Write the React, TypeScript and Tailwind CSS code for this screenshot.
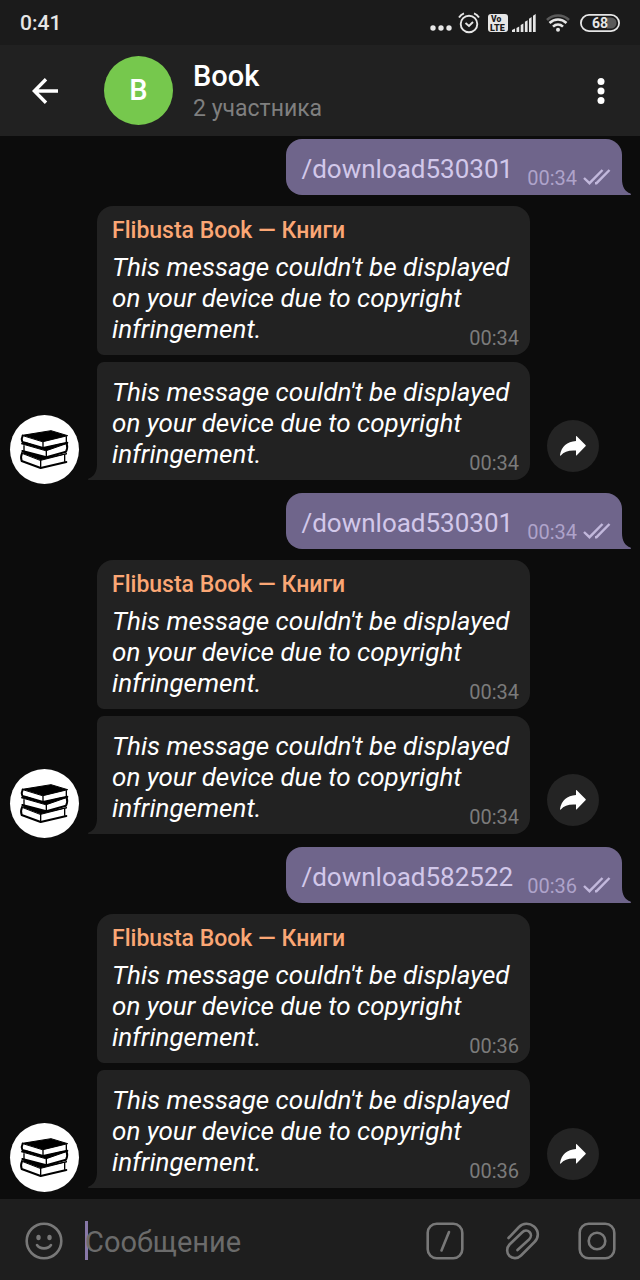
import { useState } from 'react';

type Exchange = {
  command: string;
  time: string;
};

const AUTHOR = 'Flibusta Book — Книги';
const NOTICE = "This message couldn't be displayed on your device due to copyright infringement.";

const exchanges: Exchange[] = [
  { command: '/download530301', time: '00:34' },
  { command: '/download530301', time: '00:34' },
  { command: '/download582522', time: '00:36' },
];

function StatusBar() {
  return (
    <div className="flex h-[45px] items-center justify-between bg-[#1b1b1b] px-5 text-[#e6e6e6]">
      <span className="text-[21px] leading-6 font-medium">0:41</span>
      <div className="flex items-center">
        <svg className="mt-[11px] mr-[6px] h-[6px] w-[22px]" viewBox="0 0 22 6" fill="currentColor">
          <circle cx="3" cy="3" r="2.7" />
          <circle cx="11" cy="3" r="2.7" />
          <circle cx="19" cy="3" r="2.7" />
        </svg>
        {/* Alarm */}
        <svg className="mr-2 h-[22px] w-[22px]" viewBox="0 0 22 22" fill="none" stroke="currentColor" strokeWidth="1.9">
          <circle cx="11" cy="12" r="8.3" />
          <path d="M7.5 11 L11 14 L15 10" />
          <path d="M1 5.5 C2.3 3.3 3.8 2 6 1.3 M16 1.3 C18.2 2 19.7 3.3 21 5.5" />
        </svg>
        {/* VoLTE */}
        <svg className="mr-1 h-[18px] w-5" viewBox="0 0 20 18">
          <rect width="20" height="18" rx="3" fill="#e6e6e6" />
          <text x="3" y="8" fontSize="8.5" fontWeight="900" fill="#1b1b1b">Vo</text>
          <text x="2" y="16.5" fontSize="9" fontWeight="900" fill="#1b1b1b">LTE</text>
        </svg>
        {/* Signal */}
        <svg className="mr-[10px] h-[18px] w-6" viewBox="0 0 24 18" fill="currentColor">
          <path d="M0 18 V16 L3 14.5 V18 Z M4.5 18 V14 L7.2 12.5 V18 Z M8.7 18 V11 L11.4 9.5 V18 Z M12.9 18 V7.8 L15.6 6.2 V18 Z M17 18 V4.7 L19.6 3 V18 Z M21 18 V1.8 L23.7 0 V18 Z" />
        </svg>
        {/* Wi-Fi */}
        <svg className="mr-[10px] h-[18px] w-6" viewBox="0 0 24 18" fill="none" strokeWidth="2.6">
          <path d="M1 6 C7 0 17 0 23 6" stroke="#5a5a5a" />
          <path d="M3.5 9 C8.5 4.3 15.5 4.3 20.5 9 M7 12.6 C10 9.8 14 9.8 17 12.6" stroke="currentColor" />
          <circle cx="12" cy="15.8" r="2" fill="currentColor" />
        </svg>
        {/* Battery */}
        <svg className="h-[18px] w-10" viewBox="0 0 40 18">
          <path d="M27 3.5 H31 A5.5 5.5 0 0 1 31 14.5 H27 Z" fill="#5a5a5a" />
          <rect x="0.9" y="0.9" width="38.2" height="16.2" rx="8.1" fill="none" stroke="#e6e6e6" strokeWidth="1.8" />
          <text x="20" y="14" fontSize="14" fontWeight="700" textAnchor="middle" fill="#e6e6e6">68</text>
        </svg>
      </div>
    </div>
  );
}

function ChatHeader() {
  return (
    <header className="flex h-[91px] items-center bg-[#212121] pl-8 pr-[31px]">
      <button aria-label="Назад" className="text-white">
        <svg className="h-[26px] w-[26px]" viewBox="0 0 26 26" fill="none" stroke="currentColor" strokeWidth="3.4">
          <path d="M26 13 H2.5 M14 1.3 L2.4 13 L14 24.7" />
        </svg>
      </button>
      <div className="ml-[46px] flex size-[69px] items-center justify-center rounded-full bg-[#76c84d] text-[29px] font-medium text-white">
        B
      </div>
      <div className="ml-5 flex-1 pt-1">
        <h1 className="text-[29px] leading-8 font-medium text-white">Book</h1>
        <p className="text-[23px] leading-[34px] text-[#7f7f7f]">2 участника</p>
      </div>
      <button aria-label="Меню" className="px-1 text-white">
        <svg className="h-[26px] w-2" viewBox="0 0 8 26" fill="currentColor">
          <circle cx="4" cy="3.6" r="3.5" />
          <circle cx="4" cy="13" r="3.5" />
          <circle cx="4" cy="22.4" r="3.5" />
        </svg>
      </button>
    </header>
  );
}

function OutgoingMessage({ command, time }: Exchange) {
  return (
    <div className="relative mr-[18px] flex h-14 items-center self-end rounded-[16px] rounded-br-none bg-[#6f658b] pr-[11px] pl-[15px]">
      <a href="#" className="mt-1 text-[26px] leading-[31px] text-[#d2c8ea]">{command}</a>
      <span className="mt-[22px] ml-[14px] text-[20px] leading-6 text-[#aea3ca]">{time}</span>
      <svg className="mt-5 ml-[6px] h-4 w-7" viewBox="0 0 28 16" fill="none" stroke="#c2b8dc" strokeWidth="2.4">
        <path d="M1 9 L6.5 14.2 L19.5 1 M12 14.2 L13.5 14.2 L26.5 1" />
      </svg>
      <svg className="absolute bottom-0 left-full h-4 w-[9px]" viewBox="0 0 9 16" fill="#6f658b">
        <path d="M0 0 C0 8 3 12.500 8.500 14.500 Q9.500 16 8 16 H0 Z" />
      </svg>
    </div>
  );
}

function IncomingMessage({ author, time }: { author?: string; time: string }) {
  return (
    <div
      className={
        author
          ? 'rounded-[16px] rounded-bl-[7px] bg-[#222222] px-[15px] pt-[11px] pb-[10px]'
          : 'relative mt-[7px] rounded-[16px] rounded-tl-[7px] rounded-bl-none bg-[#222222] px-[15px] pt-[15px] pb-[10px]'
      }
    >
      {author && <p className="mb-[7px] text-[23px] leading-7 font-medium text-[#fba775]">{author}</p>}
      <p className="text-[26px] leading-[31px] text-white italic">
        {NOTICE}
        {/* floats onto the last line */}
        <span className="float-right mt-3 -mr-1 text-[20px] leading-6 text-[#7b7b7b] not-italic">{time}</span>
      </p>
      {!author && (
        <svg className="absolute right-full bottom-0 h-4 w-[9px]" viewBox="0 0 9 16" fill="#222222">
          <path d="M9 0 C9 8 6 12.500 0.500 14.500 Q-0.500 16 1 16 H9 Z" />
        </svg>
      )}
    </div>
  );
}

function BooksAvatar() {
  return (
    <div className="-mb-1 size-[69px] shrink-0 rounded-full bg-white">
      <svg className="size-full" viewBox="15 15 207 207" fill="none" stroke="#000" strokeLinejoin="round" strokeLinecap="round">
        {/* bottom book */}
        <path d="M50 129 L66 127 L122 142 L150 138 L186 131 L107 151 Z" fill="#000" strokeWidth="3" />
        <path d="M51 130 Q46 140 50 153 L107 174 L184 156" strokeWidth="6" />
        <path d="M107 151 V172 M179 134 V154" strokeWidth="4" />
        {/* middle book */}
        <path d="M50 101 L66 99 L114 115 L170 101 L187 100 L124 122 Z" fill="#000" strokeWidth="3" />
        <path d="M57 107 V123 M124 122 V140" strokeWidth="4" />
        <path d="M52 123 L124 142 L183 125 Q189 114 185 101" strokeWidth="6" />
        {/* top book */}
        <path d="M52 76 L138 62 L188 77 L114 95 Z" fill="#000" strokeWidth="3" />
        <path d="M53 77 Q48 86 52 96 L114 114 L187 98" strokeWidth="6" />
        <path d="M114 95 V113 M184 80 V97" strokeWidth="4" />
      </svg>
    </div>
  );
}

function ReplyGroup({ time }: { time: string }) {
  return (
    <div className="mt-[11px] flex items-end pl-[10px]">
      <BooksAvatar />
      <div className="ml-[18px] w-[433px]">
        <IncomingMessage author={AUTHOR} time={time} />
        <IncomingMessage time={time} />
      </div>
      <button aria-label="Переслать" className="mb-2 ml-[17px] flex size-[52px] items-center justify-center rounded-full bg-[#242424] text-white">
        <svg className="h-5 w-[26px]" viewBox="0 0 26 20" fill="currentColor">
          <path d="M16 0.500 Q16 -0.500 17 0.400 L25.500 9 Q26 9.700 25.500 10.300 L17 19 Q16 20 16 19 V14.500 C9 14 4 15.500 0.800 19.500 Q0 20 0 19 C1.500 10.500 7 5.500 16 5 Z" />
        </svg>
      </button>
    </div>
  );
}

function Composer() {
  const [text, setText] = useState('');

  return (
    <footer className="flex h-[81px] items-center bg-[#1e1e1e] pt-[2px] pr-6 pl-[25px] text-[#787878]">
      <button aria-label="Эмодзи">
        <svg className="size-[38px]" viewBox="0 0 38 38" fill="none" stroke="currentColor" strokeWidth="2.600">
          <circle cx="19" cy="19" r="17.300" />
          <path d="M12 23 C15 27.500 23 27.500 26 23" strokeLinecap="round" />
          <ellipse cx="13.500" cy="15.500" rx="2.200" ry="2.800" fill="currentColor" stroke="none" />
          <ellipse cx="24.500" cy="15.500" rx="2.200" ry="2.800" fill="currentColor" stroke="none" />
        </svg>
      </button>
      {/* Caret */}
      <span className="ml-[22px] h-[39px] w-[3px] bg-[#8878a8]" />
      <input
        type="text"
        aria-label="Сообщение"
        placeholder="Сообщение"
        value={text}
        onChange={(e) => setText(e.target.value)}
        className="-ml-[3px] h-11 min-w-0 flex-1 bg-transparent pt-[3px] text-[29px] text-white outline-none placeholder:text-[#6b6b6b]"
      />
      <div className="flex items-center gap-[38px]">
        <button aria-label="Команды">
          <svg className="size-[38px]" viewBox="0 0 38 38" fill="none" stroke="currentColor" strokeWidth="2.600">
            <rect x="1.700" y="1.700" width="34.600" height="34.600" rx="9" />
            <path d="M23 10 L15.500 28.500" strokeLinecap="round" />
          </svg>
        </button>
        <button aria-label="Прикрепить">
          <svg className="size-[38px]" viewBox="0 0 38 38" fill="none" stroke="currentColor" strokeWidth="2.600" strokeLinecap="round">
            <path d="M6.500 16 L17 5 C21 1 27 0.500 32 4.500 C37.500 9.500 36.500 16 32.500 20 L19 33.500 C15.500 37 10.500 36.800 7.500 34 C4.500 31 4.300 26 7.500 22.500 L20 10.500 C22.500 8 25.500 8.200 27.500 10 C29.500 12 29.500 15 27 17.500 L15.500 28" />
          </svg>
        </button>
        <button aria-label="Камера">
          <svg className="size-[38px]" viewBox="0 0 38 38" fill="none" stroke="currentColor" strokeWidth="2.600">
            <rect x="1.700" y="1.700" width="34.600" height="34.600" rx="9" />
            <circle cx="19" cy="19" r="8.300" />
          </svg>
        </button>
      </div>
    </footer>
  );
}

export default function App() {
  return (
    <div className="flex min-h-screen flex-col bg-[#0c0c0c] font-['Roboto',sans-serif]">
      <StatusBar />
      <ChatHeader />
      <main className="flex flex-1 flex-col gap-[13px] pt-[3px] pb-[11px]">
        {exchanges.map((exchange, i) => (
          <div key={i} className="flex flex-col">
            <OutgoingMessage {...exchange} />
            <ReplyGroup time={exchange.time} />
          </div>
        ))}
      </main>
      <Composer />
    </div>
  );
}
